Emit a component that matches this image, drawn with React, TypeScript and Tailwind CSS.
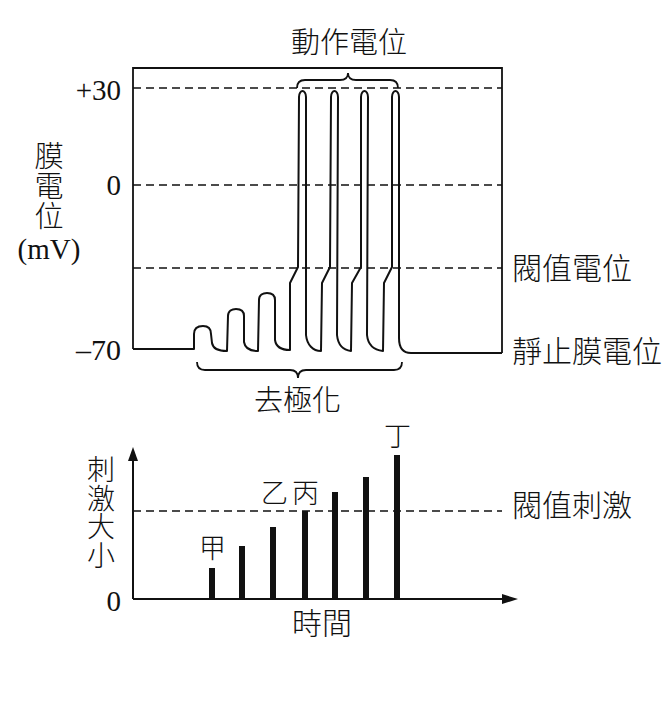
const font = { fontFamily: '"Liberation Serif", "Noto Sans CJK TC", serif' };

const bars = [
  { x: 209, top: 568 },
  { x: 239, top: 546 },
  { x: 270, top: 527 },
  { x: 302, top: 511 },
  { x: 332, top: 492 },
  { x: 363, top: 477 },
  { x: 394, top: 455 },
];

// membrane potential trace: 3 sub-threshold bumps then 4 spikes
const trace = [
  "M133 349 L194 349",
  "L194 334 C194 328 198 326 203 326 C208 326 211 328 211 334 L212 343 C213 349 218 351 227 351",
  "L228 316 C228 311 232 309 236 309 C241 309 244 311 244 316 L244 342 C245 349 250 351 258 351",
  "L259 300 C259 295 263 293 267 293 C272 293 275 295 275 300 L275 340 C276 347 282 350 290 350",
  "L290 283 L298 267 L299 97 C299 93 301 91 302.5 91 C304 91 306 93 306 97 L306 335 C307 345 313 351 321 351",
  "L322 283 L330 267 L331 97 C331 93 333 91 334.5 91 C336 91 338 93 338 97 L337 335 C338 345 343 350 351 351",
  "L352 283 L361 267 L361 97 C361 93 363 91 364.5 91 C366 91 368 93 368 97 L367 335 C368 345 374 350 383 351",
  "L384 283 L392 267 L392 97 C392 93 394 91 395.5 91 C397 91 399 93 399 97 L399 338 C399 348 403 353 411 353",
  "L502 353",
].join(" ");

function Diagram() {
  return (
    <svg className="absolute inset-0" width={671} height={702} viewBox="0 0 671 702">
      <g fill="none" stroke="#111" strokeWidth={1.8}>
        {/* frame */}
        <path d="M133 349 L133 68 L502 68 L502 353" />
        {/* dashed reference lines */}
        <g strokeDasharray="8 5" strokeWidth={1.6}>
          <line x1={133} y1={88} x2={502} y2={88} />
          <line x1={133} y1={185} x2={502} y2={185} />
          <line x1={133} y1={268} x2={502} y2={268} />
          <line x1={133} y1={511} x2={502} y2={511} />
        </g>
        <path d={trace} strokeWidth={2} strokeLinejoin="round" />
        {/* braces */}
        <path d="M297 88 Q297 80 305 80 L340 80 Q348 80 348 73 Q348 80 356 80 L390 80 Q398 80 398 88" />
        <path d="M197 362 Q197 370 205 370 L290 370 Q298 370 298 378 Q298 370 306 370 L394 370 Q402 370 402 362" />
        {/* stimulus axes */}
        <path d="M133 599 L133 458 M133 599 L504 599" strokeWidth={2} />
      </g>
      <polygon points="133,447 128,461 138,461" fill="#111" />
      <polygon points="518,599 502,594 502,604" fill="#111" />
      {bars.map((b) => (
        <rect key={b.x} x={b.x} y={b.top} width={6} height={599 - b.top} fill="#111" />
      ))}
    </svg>
  );
}

export default function App() {
  return (
    <div className="relative w-[671px] h-[702px] bg-white text-[#111] font-light overflow-hidden" style={font}>
      <Diagram />

      <span className="absolute left-[291px] top-[29px] text-[29px] leading-none">動作電位</span>

      <span className="absolute left-[40px] top-[76px] w-[81px] text-right text-[29px] leading-none">+30</span>
      <span className="absolute left-[40px] top-[171px] w-[81px] text-right text-[29px] leading-none">0</span>
      <span className="absolute left-[40px] top-[335px] w-[81px] text-right text-[30px] leading-none">–70</span>

      <div className="absolute left-[18px] top-[142px] w-[62px] flex flex-col items-center text-[29px] leading-[30px]">
        <span>膜</span>
        <span>電</span>
        <span>位</span>
        <span className="mt-[2px]">(mV)</span>
      </div>

      <span className="absolute left-[512px] top-[254px] text-[30px] leading-none">閥值電位</span>
      <span className="absolute left-[512px] top-[337px] text-[30px] leading-none">靜止膜電位</span>
      <span className="absolute left-[254px] top-[387px] text-[29px] leading-none">去極化</span>

      <div className="absolute left-[87px] top-[457px] flex flex-col text-[28px] leading-[28.5px]">
        <span>刺</span>
        <span>激</span>
        <span>大</span>
        <span>小</span>
      </div>
      <span className="absolute left-[40px] top-[587px] w-[81px] text-right text-[29px] leading-none">0</span>

      <span className="absolute left-[199px] top-[536px] text-[27px] leading-none">甲</span>
      <div className="absolute left-[261px] top-[481px] flex gap-[4px] text-[27px] leading-none">
        <span>乙</span>
        <span>丙</span>
      </div>
      <span className="absolute left-[384px] top-[424px] text-[27px] leading-none">丁</span>

      <span className="absolute left-[512px] top-[491px] text-[30px] leading-none">閥值刺激</span>
      <span className="absolute left-[292px] top-[609px] text-[30px] leading-none">時間</span>
    </div>
  );
}
